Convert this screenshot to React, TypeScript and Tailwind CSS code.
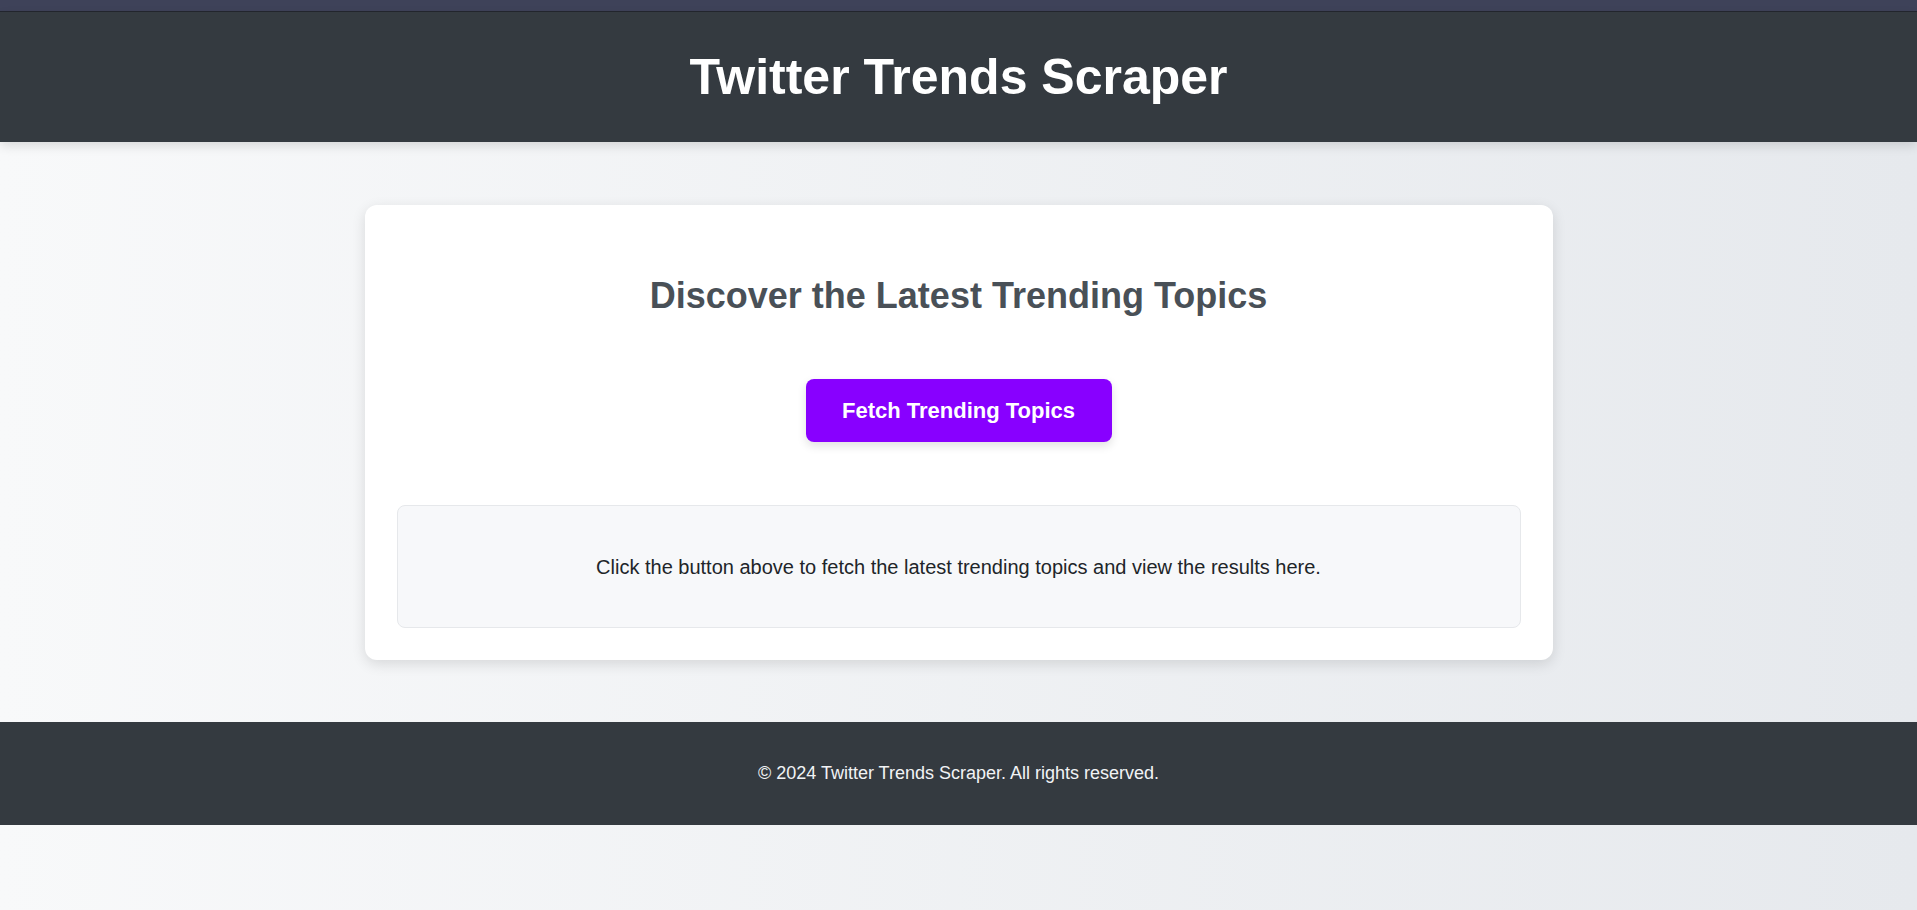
import React from 'react';

export default function App() {
  return (
    <div className="min-h-screen w-full bg-gradient-to-r from-[#f8f9fa] to-[#e6e9ed] font-['Liberation_Sans',Arial,sans-serif]">
      {/* top strip */}
      <div className="h-[12px] bg-[#3e4259] border-b border-[#23262f]"></div>

      {/* Header */}
      <header className="h-[130px] bg-[#343a40] flex items-center justify-center shadow-[0_4px_10px_rgba(0,0,0,0.12)] relative z-10">
        <h1 className="text-[50px] font-bold text-white leading-none">Twitter Trends Scraper</h1>
      </header>

      {/* Main */}
      <main className="pt-[63px] pb-[62px]">
        <div className="w-[1188px] mx-auto bg-white rounded-xl shadow-[0_4px_14px_rgba(0,0,0,0.12)] px-8 pt-8 pb-[32px] flex flex-col items-center">
          <h2 className="mt-[37px] text-[36px] leading-[1.2] font-bold text-[#495057]">Discover the Latest Trending Topics</h2>
          <button className="mt-[62px] w-[306px] h-[63px] rounded-lg bg-[#8800ff] text-white text-[22px] font-bold shadow-[0_4px_10px_rgba(0,0,0,0.12)]">
            Fetch Trending Topics
          </button>
          <div className="mt-[63px] w-full h-[123px] rounded-lg bg-[#f7f8fa] border border-[#e6e8eb] flex items-center justify-center">
            <p className="text-[20px] text-[#212529]">Click the button above to fetch the latest trending topics and view the results here.</p>
          </div>
        </div>
      </main>

      {/* Footer */}
      <footer className="h-[103px] bg-[#343a40] flex items-center justify-center">
        <p className="text-[18px] text-[#f1f3f5]">© 2024 Twitter Trends Scraper. All rights reserved.</p>
      </footer>
    </div>
  );
}
